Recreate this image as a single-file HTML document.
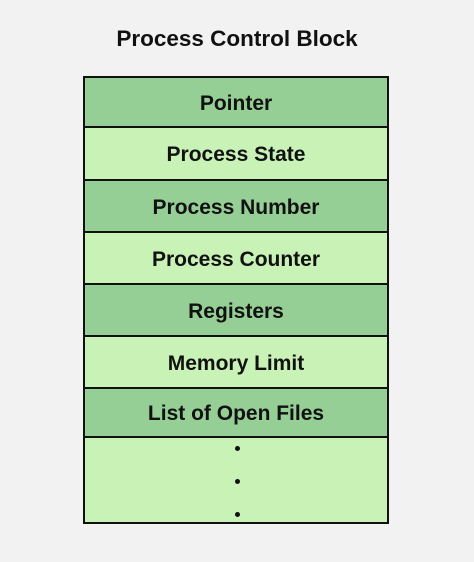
<!DOCTYPE html>
<html><head><meta charset="utf-8"><style>
html,body{margin:0;padding:0;background:#f2f2f2;width:474px;height:562px;overflow:hidden;font-family:"Liberation Sans",sans-serif;}
.t{position:absolute;left:0;width:474px;top:26px;text-align:center;font-size:22.5px;font-weight:bold;color:#111;}
.box{position:absolute;left:83px;top:76px;width:302px;height:444px;border:2px solid #111;background:#c9f2b6;}
.r{position:absolute;left:0;width:302px;text-align:center;font-size:21px;font-weight:bold;color:#111;border-bottom:2px solid #111;box-sizing:border-box;display:flex;align-items:center;justify-content:center;padding-top:3px;}
.d{background:#95cf95;}
.l{background:#c9f2b6;}
.dot{position:absolute;left:150px;width:5px;height:5px;border-radius:50%;background:#111;}
</style></head><body>
<div class="t">Process Control Block</div>
<div class="box">
<div class="r d" style="top:0;height:50px">Pointer</div>
<div class="r l" style="top:50px;height:53px">Process State</div>
<div class="r d" style="top:103px;height:52px">Process Number</div>
<div class="r l" style="top:155px;height:52px">Process Counter</div>
<div class="r d" style="top:207px;height:52px">Registers</div>
<div class="r l" style="top:259px;height:52px">Memory Limit</div>
<div class="r d" style="top:311px;height:49px">List of Open Files</div>
<div class="dot" style="top:368px"></div>
<div class="dot" style="top:401px"></div>
<div class="dot" style="top:434px"></div>
</div>
</body></html>
